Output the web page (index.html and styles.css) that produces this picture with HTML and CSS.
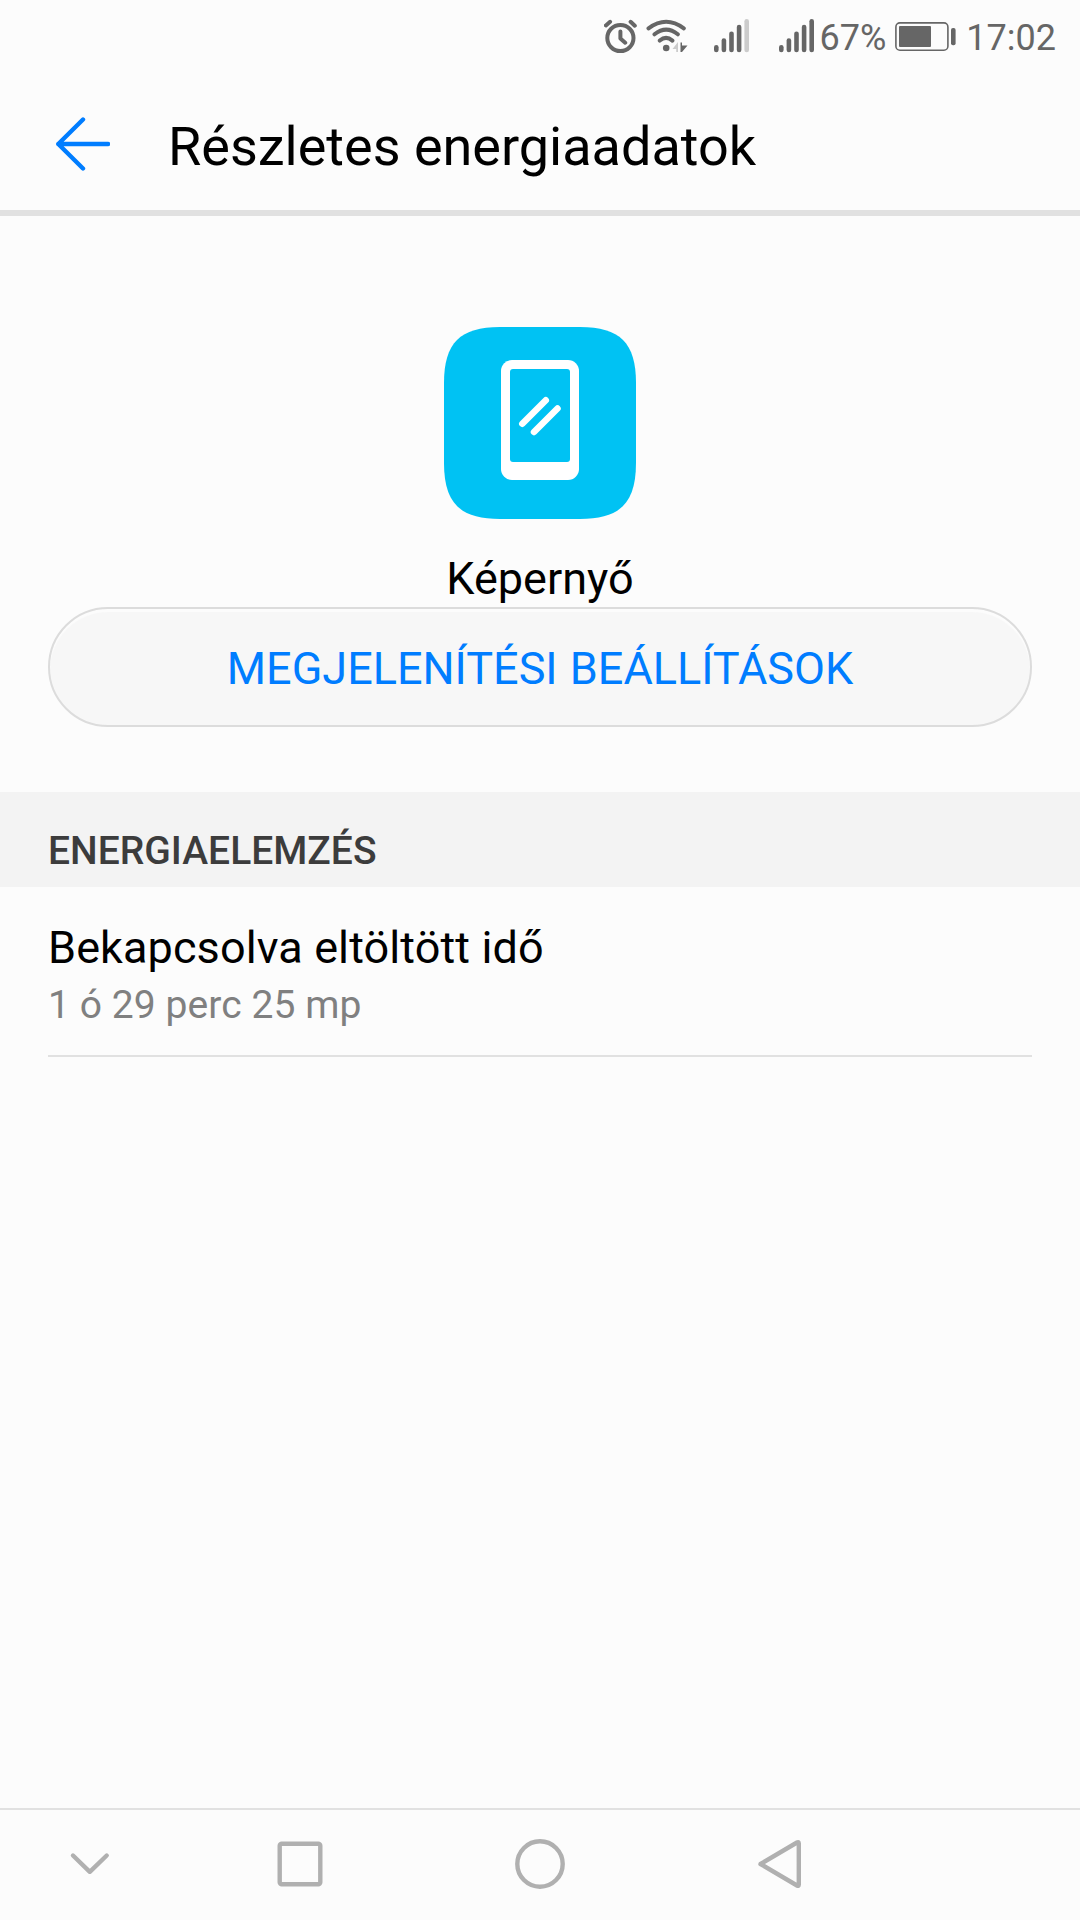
FILE: index.html
```html
<!DOCTYPE html>
<html lang="hu">
<head>
    <meta charset="UTF-8">
    <meta name="viewport" content="width=device-width, initial-scale=1.0">
    <title>Részletes energiaadatok</title>
    <link rel="stylesheet" href="styles.css">
</head>
<body>
    <div class="screen">
        <div class="status-bar">
            <svg class="alarm" width="34" height="72" viewBox="0 0 34 72" fill="none" stroke="#666" stroke-width="4" stroke-linecap="round" stroke-linejoin="round">
                <circle cx="16.4" cy="38" r="13.1"/>
                <path d="M16.4 31.5v7l4.8 4.2M1.9 25.4l4.2-3.6M26.6 21.8l4.2 3.9"/>
            </svg>
            <svg class="wifi" width="42" height="72" viewBox="0 0 42 72" fill="none" stroke="#666" stroke-width="4" stroke-linecap="round">
                <path d="M2.5 28.3Q20.2 15.2 37.8 28.3M8.5 34.3Q20.2 25 31.8 34.3M13.8 40.6Q20 35.2 26.4 40.6"/>
                <circle cx="20.2" cy="48" r="3.3" fill="#666" stroke="none"/>
                <path d="M26.5 49l5.5-7v10h-1.8v-3z" fill="#ccc" stroke="none"/>
                <path d="M34.5 42.5H36v3h5.5L36 52h-1.5z" fill="#666" stroke="none"/>
            </svg>
            <svg class="signal" width="37" height="72" viewBox="0 0 37 72" fill="#666">
                <rect x="1" y="45" width="4.6" height="7.3" rx="2.3"/>
                <rect x="8.6" y="38.3" width="4.6" height="14" rx="2.3"/>
                <rect x="16.2" y="31.5" width="4.6" height="20.8" rx="2.3"/>
                <rect x="23.8" y="24.8" width="4.6" height="27.5" rx="2.3"/>
                <rect x="31.4" y="19" width="4.6" height="33.3" rx="2.3" fill="#ccc"/>
            </svg>
            <svg class="signal-full" width="37" height="72" viewBox="0 0 37 72" fill="#666">
                <rect x="1" y="45" width="4.6" height="7.3" rx="2.3"/>
                <rect x="8.6" y="38.3" width="4.6" height="14" rx="2.3"/>
                <rect x="16.2" y="31.5" width="4.6" height="20.8" rx="2.3"/>
                <rect x="23.8" y="24.8" width="4.6" height="27.5" rx="2.3"/>
                <rect x="31.4" y="19" width="4.6" height="33.3" rx="2.3"/>
            </svg>
            <span class="percent">67%</span>
            <svg class="battery" width="61" height="72" viewBox="0 0 61 72" fill="#666">
                <rect x="0.9" y="22.9" width="52" height="27.3" rx="4" fill="none" stroke="#666" stroke-width="1.6"/>
                <rect x="4" y="26" width="32" height="21" rx="1"/>
                <rect x="56" y="28" width="4.6" height="17.3" rx="2"/>
            </svg>
            <span class="time">17:02</span>
        </div>

        <div class="header">
            <svg class="back" width="56" height="56" viewBox="0 0 56 56" fill="none" stroke="#007dff" stroke-width="4.4" stroke-linecap="round" stroke-linejoin="round">
                <path d="M29 3.5L4.3 28 29 52.500M4.3 28H54"/>
            </svg>
            <h1>Részletes energiaadatok</h1>
        </div>

        <div class="app">
            <svg width="192" height="192" viewBox="0 0 192 192">
                <path d="M0 96V56C0 16 16 0 56 0H136C176 0 192 16 192 56V136C192 176 176 192 136 192H56C16 192 0 176 0 136Z" fill="#00c2f3"/>
                <rect x="57" y="33" width="78" height="120" rx="11" fill="#fff"/>
                <rect x="66" y="42" width="60" height="93" rx="3" fill="#00c2f3"/>
                <path d="M78.3 96.7l23.5-23.5M90 105l23.5-23.5" stroke="#fff" stroke-width="6.5" stroke-linecap="round"/>
            </svg>
            <p class="app-name">Képernyő</p>
            <button class="settings-btn">MEGJELENÍTÉSI BEÁLLÍTÁSOK</button>
        </div>

        <h2>ENERGIAELEMZÉS</h2>
        <div class="item">
            <p class="item-title">Bekapcsolva eltöltött idő</p>
            <p class="item-value">1 ó 29 perc 25 mp</p>
        </div>

        <div class="nav-bar">
            <svg width="50" height="50" viewBox="0 0 50 50"><path d="M8 16.5l16.8 16.3L41.7 16.5"/></svg>
            <svg width="50" height="50" viewBox="0 0 50 50"><rect x="4.7" y="4.7" width="40.6" height="40.6" rx="2"/></svg>
            <svg width="50" height="50" viewBox="0 0 50 50"><circle cx="25" cy="25" r="22.7"/></svg>
            <svg width="50" height="50" viewBox="0 0 50 50"><path d="M5.5 25L42 3.5Q43.800 2.5 43.800 4.500V45.500Q43.800 47.500 42 46.500Z"/></svg>
        </div>
    </div>
</body>
</html>
```
FILE: styles.css
```css
* {
    box-sizing: border-box;
}
body {
    margin: 0;
    background: #fcfcfc;
    color: #000;
    font-family: Roboto, sans-serif;
}
h1, h2, p {
    margin: 0;
    font-weight: 400;
}
svg {
    display: block;
    flex-shrink: 0;
}
.screen {
    width: 1080px;
    height: 1920px;
    display: flex;
    flex-direction: column;
}
.status-bar {
    height: 72px;
    padding-right: 24px;
    display: flex;
    justify-content: flex-end;
    color: #666;
    font-size: 36px;
    line-height: 76px;
}
.wifi {
    margin-left: 8px;
}
.signal {
    margin-left: 25px;
}
.signal-full {
    margin-left: 28px;
}
.percent {
    margin-left: 5px;
}
.battery {
    margin: 0 10px 0 9px;
}
.header {
    height: 144px;
    padding: 0 54px;
    display: flex;
    align-items: center;
    border-bottom: 6px solid #e1e1e1;
}
.back {
    margin-top: 5px;
}
h1 {
    margin-left: 58px;
    padding-top: 11px;
    font-size: 54px;
    line-height: 64px;
}
.app {
    padding: 111px 48px 65px;
    display: flex;
    flex-direction: column;
    align-items: center;
}
.app-name {
    margin-top: 31px;
    font-size: 45px;
    line-height: 57px;
}
.settings-btn {
    width: 100%;
    height: 120px;
    padding: 3px 0 0;
    border: 2px solid #dcdcdc;
    border-radius: 60px;
    background: #f7f7f7;
    box-shadow: inset 0 3px 1px #fcfcfc;
    color: #007dff;
    font-family: inherit;
    font-size: 45px;
    word-spacing: 1px;
}
h2 {
    height: 95px;
    padding: 23px 48px 0;
    background: #f3f3f3;
    color: #3c3c3c;
    font-size: 39px;
    font-weight: 500;
    line-height: 73px;
}
.item {
    height: 170px;
    margin: 0 48px;
    padding-top: 32px;
    border-bottom: 2px solid #e1e1e1;
}
.item-title {
    font-size: 45px;
    line-height: 58px;
    letter-spacing: 0.1px;
}
.item-value {
    color: #808080;
    font-size: 39px;
    line-height: 56px;
    letter-spacing: 0.08px;
}
.nav-bar {
    height: 112px;
    margin-top: auto;
    padding-bottom: 2px;
    display: grid;
    grid-template-columns: 180px 240px 240px 240px;
    place-items: center;
    border-top: 2px solid #e1e1e1;
}
.nav-bar svg {
    fill: none;
    stroke: #b0b0b0;
    stroke-width: 4.4;
    stroke-linecap: round;
    stroke-linejoin: round;
}
```
